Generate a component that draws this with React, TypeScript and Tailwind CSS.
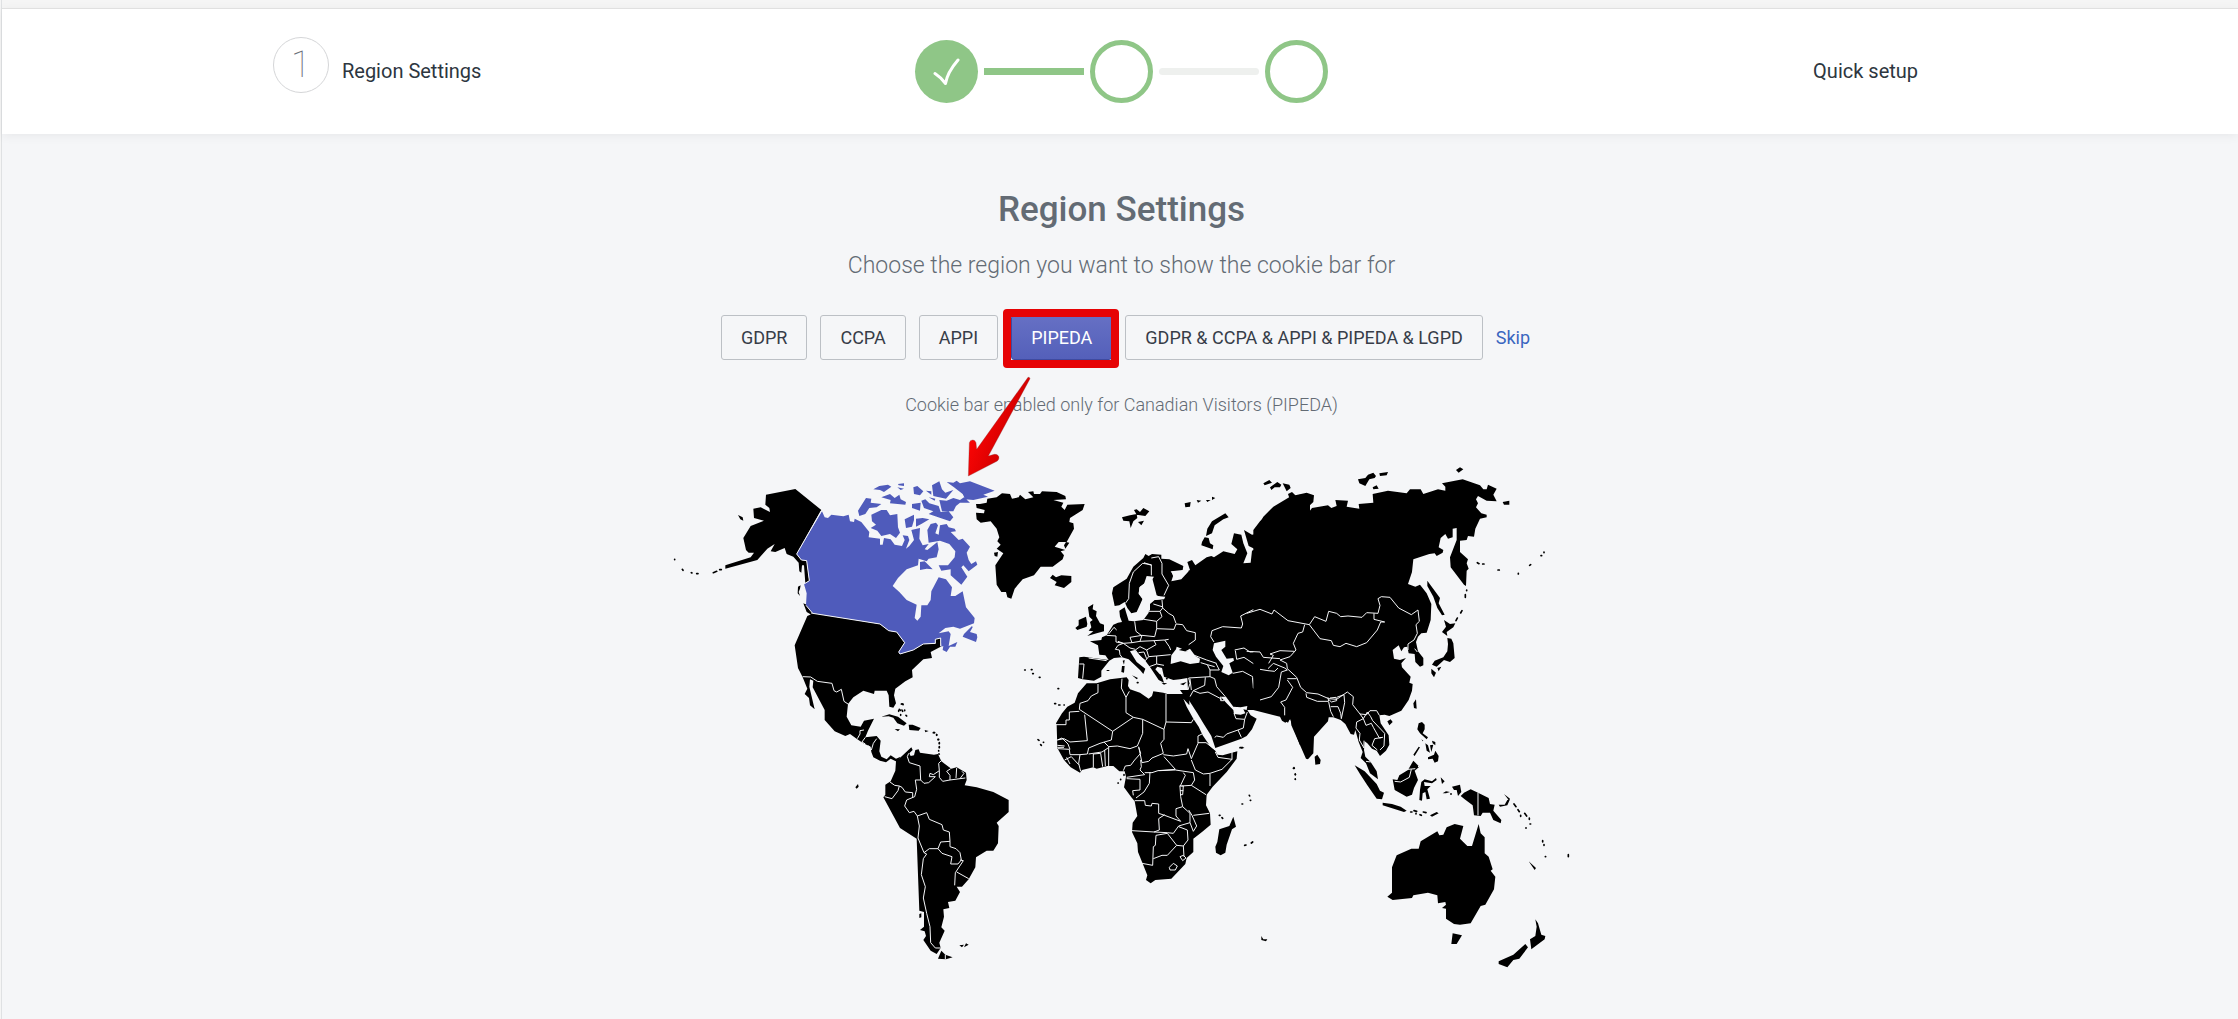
import { useState } from "react";
import clsx from "clsx";

type Tile = {
  name: string;
  x: number;
  y: number;
  land: string;
  highlighted?: string;
  seas?: string;
  borders: string;
  islets: string;
};

const regions = [
  { id: "GDPR", label: "GDPR", visitors: "European" },
  { id: "CCPA", label: "CCPA", visitors: "Californian" },
  { id: "APPI", label: "APPI", visitors: "Japanese" },
  { id: "PIPEDA", label: "PIPEDA", visitors: "Canadian" },
  { id: "ALL", label: "GDPR & CCPA & APPI & PIPEDA & LGPD", visitors: "All" },
];

// Every tile is drawn at 3x and scaled down, x / y is its top left corner on the map
const tiles: Tile[] = [
  {
    name: "North America",
    x: 660,
    y: 450,
    land: `M318,134 406,117 484,180 410,312 424,330 440,332 448,392 436,400 432,346 426,346 424,368 418,364 416,338 400,320 380,312 374,294 346,306 332,304 344,282 322,296 292,330 196,356 196,346 272,322 282,308 266,308 258,300 250,264 272,228 312,212 282,204 280,176 302,172 330,186 328,174 316,164z
      M234,195 248,202 250,212 241,208z M430,460 440,464 456,480 454,494 440,486z M414,410 422,406 420,416 416,426 420,438 413,430z
      M442,498 460,490 660,522 686,542 710,546 734,578 716,606 720,612 760,600 790,582 826,582 826,568 842,564 842,590 812,606 816,624 790,628 756,660 758,682 736,694 706,716 702,736 708,760 700,773 688,770 686,736 680,722 644,722 642,732 610,722 580,742 564,762 560,800 574,826 602,830 612,812 642,806 624,842 616,862 650,858 662,872 658,904 664,920 680,928 692,916 708,926 722,920 712,936 692,926 678,937 660,932 640,922 634,906 632,890 610,880 592,868 570,852 556,858 524,844 494,810 494,780 458,712 460,692 450,688 448,710 464,778 450,766 447,744 434,732 442,716 428,682 414,654 404,586z
      M664,800 688,793 714,800 740,820 732,827 712,820 700,803 686,799z M746,824 758,824 782,834 776,842 748,840z M704,837 720,838 714,844z M794,840 806,843 796,847z`,
    highlighted: `M486,184 494,202 504,204 514,194 550,199 566,194 570,214 582,216 584,206 604,216 628,246 626,262 660,266 660,284 668,284 672,264 692,268 704,284 726,288 734,270 728,256 744,258 748,270 738,296 748,288 762,270 754,240 780,234 778,266 788,286 806,282 794,298 802,300 832,276 836,298 830,322 806,326 800,334 776,326 774,346 740,358 714,384 698,408 718,426 740,450 770,464 764,504 772,512 782,500 784,466 802,466 812,450 814,424 836,382 858,388 876,412 872,438 886,438 908,424 918,472 944,504 942,520 900,536 880,530 856,534 836,550 866,544 872,552 866,588 892,576 886,590 870,590 860,606 848,600 850,588 844,590 842,564 826,568 826,580 790,582 760,600 720,612 716,606 734,578 710,546 686,542 660,522 458,490 438,466 440,430 432,402 448,392 440,332 424,330 410,312z
      M936,528 938,532 930,546 950,552 952,562 948,576 908,560 912,552z
      M802,240 812,222 828,218 834,226 826,250 836,254 840,226 860,222 866,232 884,236 888,244 872,246 896,270 908,266 930,290 920,308 926,330 934,342 948,334 952,344 926,364 910,346 904,352 922,380 904,404 872,376 872,358 844,362 836,346 864,346 884,322 886,304 868,282 840,272 806,278z
      M780,336 794,334 818,358 800,356 780,360z M634,194 664,180 680,180 690,196 712,192 714,232 720,248 708,264 690,252 664,258 652,242 632,234 648,224 636,214z
      M594,182 618,144 634,146 632,158 664,162 650,172 628,174 616,192 598,198z M640,118 658,108 684,104 694,110 672,126 660,120z M664,142 690,132 704,144 718,134 722,148 738,156 736,164 690,160 692,150z
      M714,102 732,100 732,108 716,106z M712,112 732,116 722,120z M760,112 772,108 790,124 780,136 762,132z M798,122 814,124 814,134z M734,208 762,194 762,210 756,230 738,234z M768,206 788,204 808,208 784,222 768,230z M756,162 782,158 780,182 756,174z
      M816,106 838,94 846,118 856,128 880,120 858,146 820,138z M860,96 880,98 890,92 900,100 930,94 1004,122 970,134 984,140 940,150 916,148 908,132 882,112z M838,150 860,152 880,144 900,150 912,142 930,158 900,158 888,168 880,184 846,184z M784,152 796,148 808,160 836,168 842,186 866,184 880,202 870,214 806,192 820,184 792,174z M806,142 826,146 824,152z`,
    borders: `M428,680 452,681 472,694 516,700 522,722 530,726 544,718 552,754 564,762 M600,842 600,852 592,866 M600,842 612,840 M616,862 606,876 616,882 M624,886 630,892 M634,900 640,880 650,866`,
    islets: `M44,328v1 M67,358l2,3 M94,368l2,1 M110,371h4 M160,368l10,-4 M179,359h5 M726,762l3,2 M718,778l3,3 M734,780v2 M722,794v2 M738,796l2,2 M820,848h2 M830,854v2 M834,868v1 M838,880v1 M838,892v1`,
  },
  {
    name: "South America",
    x: 780,
    y: 700,
    land: `M348,184 362,172 394,142 398,150 388,160 392,168 402,166 406,150 416,148 420,158 462,164 474,162 484,184 514,206 530,202 558,218 560,240 554,256 590,262 640,276 686,300 686,336 650,368 656,378 654,430 640,452 620,452 588,472 586,502 566,538 546,560 530,560 540,576 526,602 504,606 508,624 490,628 492,650 484,682 494,692 478,728 482,744 470,762 452,752 430,720 438,708 434,694 420,690 432,680 432,636 418,632 410,416 360,384 310,292 316,284 316,254 332,244 346,212z
      M484,752 496,764 518,772 498,778 474,776z M418,642 424,640 424,652 418,654z M538,736 552,734 546,742z M552,742 558,730 566,734z M226,262 234,252 236,260 230,266z`,
    borders: `M386,160 382,170 388,188 420,198 422,240 406,240 410,268 404,290 M422,240 432,250 446,248 466,230 448,230 450,220 460,224 478,212 476,190 484,182 M478,212 478,232 488,244 510,240 556,234 M510,240 510,226 500,214 512,206 M530,204 528,234 M546,214 552,220 540,236 M330,246 344,256 358,258 354,272 336,296 314,290 M358,258 366,262 376,276 398,278 398,292 M404,290 380,300 374,318 388,338 402,334 412,348 418,378 414,414 M412,348 440,338 448,358 486,374 490,390 508,396 510,424 482,426 474,446 448,446 432,458 414,414 M474,446 486,460 516,470 512,492 534,492 544,480 540,458 528,446 510,440 510,424 M540,480 550,482 526,518 524,556 M530,516 566,536 M432,458 440,462 430,476 424,524 436,560 430,594 440,640 450,680 452,728 466,744 482,744 M496,764 496,778`,
    islets: `M476,162h2 M476,152v1 M478,140v1 M478,128v1 M476,118v1 M462,98h2 M470,104v1 M364,12h5 M356,32v2 M366,30l2,4 M774,119l3,2 M790,127h1 M782,134l2,2`,
  },
  {
    name: "Greenland and Europe",
    x: 960,
    y: 450,
    land: `M48,162 60,162 80,158 82,146 110,142 126,130 150,132 156,146 176,142 180,134 196,148 220,142 204,126 220,124 222,132 240,132 246,124 290,126 316,138 318,148 280,150 310,158 304,170 314,180 322,164 374,162 368,180 330,204 328,216 340,220 342,236 320,276 296,276 284,290 316,300 302,304 312,316 308,328 278,350 242,350 222,376 188,388 164,416 154,446 142,442 138,426 124,426 110,404 106,346 130,310 110,296 122,284 112,274 118,262 110,236 92,214 62,218 50,208 48,188 72,190 74,180 50,174z M102,308 114,306 112,320 104,318z M318,276 328,278 316,296 312,286z
      M270,384 278,374 288,382 304,376 334,378 334,396 312,414 284,406 290,396z
      M486,202 510,196 530,192 532,204 520,214 512,234 508,214 490,212z M522,180 530,178 540,186 550,174 568,184 556,198 530,194z M534,216 552,212 544,226z M674,160 692,156 690,170 676,172z M710,150 724,152 714,158z M738,150 752,150 742,156z M756,140 766,144 756,150z
      M796,190 806,202 790,208 764,226 756,250 738,258 742,236 756,214z M734,262 746,264 750,280 760,286 758,298 724,286 726,276z
      M384,472 400,462 398,478 410,484 408,498 420,520 432,524 432,544 410,550 382,558 400,544 386,542 394,532 390,516 398,510 388,500z M346,534 356,526 356,510 378,500 382,522 380,530 352,540z
      M358,622 372,620 446,630 436,616 418,614 414,586 390,574 424,570 426,562 440,556 460,524 474,518 486,516 480,500 478,482 494,472 498,486 506,512 522,514 550,510 566,488 564,464 582,450 614,446 590,436 576,382 540,410 536,430 548,446 530,486 514,490 502,474 494,456 478,466 464,468 456,430 460,412 500,386 520,350 550,324 556,312 566,318 576,312 604,314 604,326 628,328 670,348 668,360 634,364 640,380 660,376 690,360 682,336 696,330 706,346 740,322 754,318 762,322 790,304 824,312 832,298 814,282 822,250 844,254 850,280 862,310 850,340 872,338 876,302 886,298 866,288 852,240 876,254 910,248 890,236 910,200 940,170 990,140 1020,134 1050,140 1050,860 1020,886 990,806 984,818 966,808 962,792 940,778 912,782 900,780 862,780 872,796 890,806 876,838 860,858 844,866 766,894 754,858 730,820 712,790 684,746 670,734 660,720 684,720 682,684 660,688 640,690 612,680 606,654 592,650 586,658 606,680 612,698 596,690 572,654 556,632 524,600 510,604 530,636 556,656 550,672 540,660 506,628 486,622 462,624 448,632 424,662 424,680 402,692 368,688 354,684z
      M516,676 534,684 530,688z M486,648 494,648 492,668 484,666z M488,632 494,630 492,644z M604,698 622,700 612,704z M660,702 680,696 670,706z M440,660h8v3h-8z`,
    seas: `M632,642 634,616 648,598 650,590 666,596 656,600 684,606 676,604 690,596 706,618 720,626 718,638 690,642 662,634z
      M762,580 796,572 796,590 784,600 800,626 820,624 822,632 808,640 818,668 806,676 784,666 790,648 768,620 758,600z
      M782,740 798,740 820,770 842,772 862,768 860,780 850,778 856,790 842,794 822,792 820,780 800,760z
      M538,412 552,402 560,378 582,380 566,404 564,420 590,438 616,440 612,448 584,450 570,462 570,480 548,504 530,510 520,494 536,486 548,448 536,432z
      M632,364 656,366 674,358 686,364 664,388 634,394 640,376z`,
    borders: `M496,460 506,446 508,400 520,366 548,340 574,344 574,376 M552,338 574,346 M574,324 596,320 606,340 606,372 626,406 612,436 M580,462 606,470 M606,450 608,474 M566,484 600,484 608,474 626,490 640,498 648,520 M600,484 606,500 590,514 552,508 M524,514 528,544 546,558 M590,514 590,536 584,560 546,556 510,562 M590,536 642,538 648,522 668,524 680,542 706,548 706,570 686,584 M510,562 516,578 490,580 474,574 M516,578 540,574 546,556 M540,574 582,572 588,584 560,600 540,590 M582,572 614,570 628,590 632,600 M614,570 626,568 M560,600 566,620 556,632 540,620 526,600 540,590 M566,620 590,618 632,614 M590,618 590,642 568,650 M440,556 468,558 468,576 490,580 474,586 466,598 478,600 480,614 486,622 M490,580 510,594 526,598 M446,552 462,532 470,540 M590,642 612,646 M372,642 368,686 M358,642 372,642 M386,624 440,632 M536,608 552,606 560,626
      M752,560 756,542 788,530 844,534 848,522 842,498 890,474 936,492 942,480 984,512 1020,518 M752,560 762,576 M824,600 852,594 870,606 904,604 928,626 968,614 994,604 1004,560 M826,602 830,628 852,622 900,654 934,662 940,636 M818,670 848,664 878,680 882,714 894,740 888,760 912,780 M878,684 880,714 910,712 930,672 954,662 966,660 960,700 946,720 900,750 M928,626 936,640 970,650 990,670 1020,690 M934,606 950,602 1000,604 M940,640 966,636 980,620 M950,600 950,612 968,622
      M698,614 740,630 770,640 M722,638 742,644 750,660 778,660 768,640 M742,644 764,650 M750,660 750,680 764,686 770,710 796,740 M686,684 750,680 M736,682 734,706 700,722 690,740 M700,722 720,730 744,726 786,748 M782,740v12h10 M686,684 690,700 684,720 M690,686 694,720 M822,790 828,806 854,808 862,786 M854,808 850,834 834,840 800,852 790,862 770,858 764,862 M834,840 844,862
      M966,662 986,656 990,684 1000,706 982,756 974,780`,
    islets: `M194,660h2 M214,659h2 M218,671h2 M238,682h2 M294,716h2 M284,761h3 M296,765h4 M312,765h1 M588,670h1 M600,676h1 M620,686h1 M532,698h2 M840,893h8`,
  },
  {
    name: "Africa",
    x: 1030,
    y: 660,
    land: `M170,70 200,70 240,58 290,52 296,60 294,78 300,88 330,98 356,116 366,108 370,94 400,98 412,102 462,102 478,94 478,136 460,116 470,140 490,176 506,200 518,226 540,258 556,272 562,284 578,286 622,274 620,296 590,336 548,380 530,404 528,436 540,460 542,494 516,516 490,536 490,576 470,594 466,612 424,656 376,660 362,670 348,660 352,646 340,616 324,576 322,550 306,516 308,488 322,468 314,424 304,412 282,382 288,350 284,334 268,334 250,318 232,318 200,326 190,322 156,330 150,338 122,322 102,300 82,264 80,196 78,190 96,160 112,140 134,128 144,100z
      M610,470 618,500 606,508 590,554 586,578 572,586 558,578 556,560 562,546 568,508 598,498z M632,263 644,262 634,266z M694,828 700,838 712,838 708,844 694,840z`,
    borders: `M204,72 204,98 184,108 174,122 150,130 148,148 248,214 310,172 288,158 288,112 274,84 276,56 M148,154 118,156 118,180 108,180 108,194 78,194 M164,164 172,242 120,246 102,236 82,240 M288,112 298,94 M310,172 338,178 402,208 408,186 408,102 M402,208 402,238 392,250 400,280 366,294 356,304 336,308 326,260 M408,186 484,188 490,178 M248,214 244,240 210,250 176,264 172,282 M338,178 338,220 322,258 300,266 262,258 236,260 222,246 M400,284 430,288 470,282 474,266 484,296 504,250 504,228 516,222 M504,248 528,248 556,270 M402,290 436,328 384,332 366,338 344,338 M236,260 236,318 M326,262 332,280 314,300 302,316 286,318 280,332 M332,300 334,320 330,330 344,344 290,352 M360,336 358,370 342,396 318,414 M388,332 436,330 490,338 M460,338 466,346 450,380 452,410 458,440 438,446 438,468 452,484 404,466 386,460 386,432 366,430 364,438 346,436 344,422 314,422 M290,356 330,358 330,390 308,392 310,406 M404,464 386,476 388,510 372,516 306,512 M372,516 412,518 430,520 446,498 480,488 480,460 458,440 M412,520 378,526 376,556 370,560 368,616 336,610 M370,596 396,586 412,586 440,556 412,520 M446,500 472,510 474,540 460,558 440,556 M460,558 462,590 M418,622 430,610 442,618 436,630 420,630z M450,590 460,586 468,594 458,602z M480,488 490,514 500,498 486,466 476,450 M490,466 538,460 M454,378 484,376 528,404 M490,338 494,360 484,376 M448,378 460,378 458,404 450,404 M450,392h10 M484,300 496,330 520,342 540,340 576,328 606,298 606,276 M540,342 540,378 M556,276 564,292 606,298 M190,322 190,282 212,280 218,320 M224,270 226,318 M172,282 150,284 146,310 152,334 M150,284 120,284 118,268 84,266 M82,256 104,258 M82,262 102,262 M82,240 96,234 114,252 120,268 M104,300 124,290 146,314 M110,292 120,312 M176,282 216,276 234,264`,
    islets: `M282,344v2 M272,358v1 M264,369h1 M568,466h2 M576,473l2,2 M644,556l4,-1 M664,549l4,-3 M658,406l1,2 M661,421h1 M636,432h2 M790,325h3 M796,342v2 M796,357v1`,
  },
  {
    name: "Asia",
    x: 1260,
    y: 450,
    land: `M-20,240 0,214 30,184 90,150 84,132 96,126 106,136 140,128 162,136 160,156 126,188 128,198 138,198 156,174 204,166 214,174 230,168 226,150 264,152 260,170 298,176 296,162 340,158 338,132 384,122 440,130 450,118 482,118 490,132 534,118 556,122 556,110 546,100 608,88 660,106 670,118 680,118 684,104 710,116 700,134 710,154 680,152 654,138 648,148 654,160 648,172 664,190 680,194 680,202 660,206 646,236 642,260 624,258 620,270 600,272 600,306 624,328 620,340 626,356 620,362 618,408 612,404 572,352 570,322 590,270 590,234 578,236 578,262 564,266 556,252 542,264 536,292 550,300 548,308 530,318 524,310 508,312 460,328 456,366 444,402 466,410 480,404 500,430 514,462 512,510 500,548 484,550 474,560 468,576 474,604 490,624 490,646 480,650 466,636 464,612 446,610 442,590 432,592 424,604 416,586 398,600 402,626 420,630 438,624 424,640 426,652 452,680 448,698 458,702 456,722 446,750 424,782 388,798 374,794 358,796 362,820 386,856 388,884 378,902 360,918 350,902 336,896 322,880 314,874 312,900 316,920 332,936 350,964 354,988 330,970 318,940 302,924 308,906 296,876 286,840 282,854 272,852 256,822 242,810 220,802 206,802 204,814 162,860 160,910 144,928 138,926 94,826 92,806 76,818 66,812 60,800 -20,780z
      M10,100 28,90 36,98 14,106z M30,112 52,96 64,104 60,112 44,112 34,120z M68,100 88,104 92,114 80,124z M294,88 316,84 324,74 340,68 348,78 344,84 328,88 316,108 298,100z M358,70 384,66 380,76 360,78z M338,112 350,106 356,116 340,118z M588,60 600,52 610,58 596,68z M728,156 748,152 748,164 732,164z
      M502,392 540,444 536,460 554,494 546,496 532,474 520,440 502,408z M552,510 570,522 586,520 580,532 560,546 562,558 546,546 558,530z M562,564 574,566 580,580 584,624 570,636 552,630 530,650 516,644 524,632 550,622 562,604 564,582z M514,656 528,668 522,682 514,670z M532,654 544,650 536,664z M460,760 468,748 470,776 462,774z M382,814 392,808 398,816 388,826z`,
    borders: `M-40,490 0,478 36,492 42,480 84,512 148,524 164,500 198,514 206,484 230,490 242,500 264,498 306,502 320,488 354,490 360,466 354,446 364,440 390,442 416,474 454,494 474,480 478,514 468,524 472,550 462,570 444,582 444,600 M148,524 180,566 214,572 220,586 240,590 258,580 290,590 320,578 352,540 362,516 374,516 342,508 342,490 M134,524 128,546 114,550 100,580 108,600 90,620 60,630 80,640 82,656 110,682 122,712 140,728 174,732 206,746 230,748 262,726 280,740 278,764 300,792 320,794 330,782 350,782 358,796 M138,730 140,742 172,754 206,754 204,742 M206,748 214,756 230,752 228,742 210,744 M206,756 212,784 220,800 M212,770 234,770 242,790 244,806 M230,742 252,734 254,758 244,806 M-40,604 0,606 10,622 60,626 M26,640 40,616 30,612 60,602 104,604 M24,656 40,640 74,654 82,660 64,666 56,712 34,740 0,750 M0,658 24,662 44,664 54,654 M82,686 110,686 M82,690 98,712 78,750 62,756 74,772 74,796 M464,596 472,606
      M300,792 310,806 290,816 288,834 300,850 298,870 312,894 312,872 M310,806 318,826 334,820 340,832 358,864 368,862 M310,806 322,786 332,800 338,812 374,850 372,888 360,900 M368,862 344,866 336,886 352,900 M318,934 332,936`,
    islets: `M652,338l5,3 M668,342h4 M714,360h4 M775,370v2 M809,346l3,-2 M843,317h2 M852,306v2 M620,420v2 M616,434v8 M606,482l-4,7 M592,504l-4,8`,
  },
  {
    name: "Oceania",
    x: 1280,
    y: 660,
    land: `M350,586 394,566 416,566 422,544 472,514 478,526 490,524 500,502 524,492 550,498 540,536 562,558 576,558 596,492 602,520 614,532 614,580 626,590 638,628 632,632 646,650 642,688 616,734 602,738 572,790 540,794 522,792 498,776 498,746 486,744 498,734 496,726 474,730 472,706 444,698 400,706 396,714 338,720 322,710 336,698 336,622z M518,820 546,826 530,852 514,852z
      M766,778 774,790 784,824 796,828 794,838 754,868 750,838 766,828 770,800z M736,852 744,862 718,896 700,900 682,922 656,912 656,904 700,884z
      M224,316 254,334 290,372 300,392 312,398 306,418 290,416 262,376 240,342z M308,428 336,432 362,440 380,452 372,456 308,436z M338,358 352,360 358,346 384,330 400,302 418,320 404,332 414,360 402,384 396,404 380,410 344,390z
      M542,408 552,398 572,388 594,398 626,414 630,432 644,434 640,452 664,480 662,490 640,480 630,458 608,458 602,468 582,466 578,436 554,418z M516,380 540,374 544,396 534,408 530,390 522,390z
      M416,190 426,186 434,194 434,208 428,220 444,232 440,238 420,220 412,208z M444,292 462,284 466,272 476,288 474,304 464,308 458,296 444,298z M400,284 416,260 420,262 404,288z M436,250 444,256 450,278 440,272z M450,256 460,254 454,276z M424,238l6,4 -2,2z M456,242 466,246 466,256 458,250z
      M424,366 434,358 456,364 468,354 470,360 456,370 432,366 434,378 452,378 442,388 450,416 440,418 436,396 428,400 426,422 418,420 420,390z M482,352 490,360 494,364 486,372z M488,400 498,394 510,396 498,400z M104,290 112,284 122,300 120,312 106,314z
      M656,434 674,434 682,420 690,418 682,436 660,440z M672,402 690,416 686,420z M746,604 768,624 764,630z M450,466 470,456 476,460 456,470z`,
    borders: `M594,398 594,466 M344,364 362,366 388,352 394,328 M384,328 406,326 M414,318l4,4`,
    islets: `M42,323v2 M46,342v2 M46,357v1 M702,432l6,8 M714,449l4,6 M722,466v3 M734,460l6,8 M748,474v4 M750,492h2 M737,504h2 M788,542v4 M792,554v2 M796,590h1 M865,584v6 M392,456h4 M402,452l8,2 M408,460v2 M420,464l4,2 M430,456l8,2 M512,402h2`,
  },
];

const WorldMap = () => (
  <svg viewBox="672 460 899 520" className="w-full max-w-[899px]" role="img" aria-label="World map">
    {tiles.map((tile) => (
      <g
        key={tile.name}
        transform={`translate(${tile.x} ${tile.y}) scale(.33333)`}
        strokeLinejoin="round"
        fill="none"
      >
        <path d={tile.land} fill="#000" />
        {tile.highlighted && <path d={tile.highlighted} fill="#4f5bbb" />}
        {tile.seas && <path d={tile.seas} fill="#f5f6f8" />}
        <path d={tile.borders} stroke="#f5f6f8" strokeWidth="3" />
        <path d={tile.islets} stroke="#000" strokeWidth="5" strokeLinecap="round" />
      </g>
    ))}
    {/* Canadian border */}
    <path
      d="M484,182 410,312 424,330 440,332 448,392 432,402 M438,466 458,490 660,522 686,542 710,546 734,578 716,606 720,612 760,600 790,582 826,580 826,568 842,564 842,588"
      transform="translate(660 450) scale(.33333)"
      fill="none"
      stroke="#f5f6f8"
      strokeWidth="3"
    />
  </svg>
);

const Arrow = () => (
  <svg
    viewBox="795 576 225 324"
    className="pointer-events-none absolute -left-12 top-[57px] z-10 h-[108px] w-[75px]"
    aria-hidden="true"
  >
    <defs>
      <linearGradient id="arrow" x1="0" y1="0" x2="1" y2="0.6">
        <stop offset="0.3" stopColor="#fa0505" />
        <stop offset="0.7" stopColor="#d80000" />
      </linearGradient>
    </defs>
    <path
      d="M996 596 Q995 590 990 592 L836 808 L834 788 Q831 779 824 780 Q816 780 814 788 L811 888 L898 843 Q905 836 902 829 Q898 821 889 823 L871 828 Z"
      fill="url(#arrow)"
      stroke="#8a3a3a"
      strokeWidth="1"
    />
  </svg>
);

const Steps = () => (
  <div className="flex items-center gap-[6px]">
    <div className="flex size-[63px] items-center justify-center rounded-full bg-[#8fc687]">
      <svg viewBox="0 0 28 28" className="size-7" aria-hidden="true">
        <path
          d="M2 15.500C6 18 9 21 12.500 25.500C14 16 19 9 25 2"
          fill="none"
          stroke="#fff"
          strokeWidth="3"
          strokeLinecap="round"
          strokeLinejoin="round"
        />
      </svg>
    </div>
    <div className="h-[7px] w-[100px] bg-[#8fc687]" />
    <div className="size-[63px] rounded-full border-5 border-[#8fc687]" />
    <div className="h-[7px] w-[100px] rounded-full bg-[#eef0ee]" />
    <div className="size-[63px] rounded-full border-5 border-[#8fc687]" />
  </div>
);

export default function App() {
  const [selected, setSelected] = useState("PIPEDA");
  const current = regions.find((region) => region.id === selected)!;

  return (
    <div className="min-h-screen bg-[#f5f5f5] pl-px font-['Roboto',sans-serif]">
      <div className="min-h-screen border-l border-[#dfe1e3] bg-[#f5f6f8]">
        <div className="h-2 bg-[#f5f5f5]" />
        <header className="border-t border-[#e0e0e0] bg-white pl-[3px] shadow-[0_2px_10px_rgba(0,0,0,0.06)]">
          <div className="grid h-[125px] grid-cols-[1fr_auto_1fr] items-center px-[12%] text-xl text-[#2d3640]">
            <div className="flex items-center gap-[13px] pb-[2px]">
              <span className="mb-3 flex size-14 items-center justify-center rounded-full border border-[#d5d6d8] text-4xl font-thin text-[#6a7078]">
                1
              </span>
              <span>Region Settings</span>
            </div>
            <Steps />
            <span className="pr-[52px] pb-[2px] text-right">Quick setup</span>
          </div>
        </header>

        <main className="flex flex-col items-center pt-[54px] pl-[3px] text-[#636b74]">
          <h1 className="text-[35px] leading-[44px] font-medium">Region Settings</h1>
          <p className="mt-[18px] text-[23px] leading-8 font-light">
            Choose the region you want to show the cookie bar for
          </p>

          <div className="mt-[33px] flex items-center gap-[13px] pl-2 text-lg">
            {regions.map((region) => (
              <div key={region.id} className="relative">
                <button
                  type="button"
                  onClick={() => setSelected(region.id)}
                  className={clsx(
                    "h-[45px] rounded-[3px] border px-[19px]",
                    region.id === selected
                      ? "border-[#3f4aa0] bg-linear-to-b from-[#6670c4] to-[#5460ba] text-white"
                      : "border-[#bcc0c5] text-[#373d48]"
                  )}
                >
                  {region.label}
                </button>
                {region.id === selected && (
                  <>
                    <div className="pointer-events-none absolute -top-[6px] -right-[7px] -bottom-2 -left-2 rounded border-8 border-[#e60305]" />
                    <Arrow />
                  </>
                )}
              </div>
            ))}
            <a href="#skip" className="text-[#3a66c0]">
              Skip
            </a>
          </div>

          <p className="mt-[31px] mb-[41px] text-lg font-light">
            Cookie bar enabled only for {current.visitors} Visitors ({current.label})
          </p>
          <WorldMap />
        </main>
      </div>
    </div>
  );
}
